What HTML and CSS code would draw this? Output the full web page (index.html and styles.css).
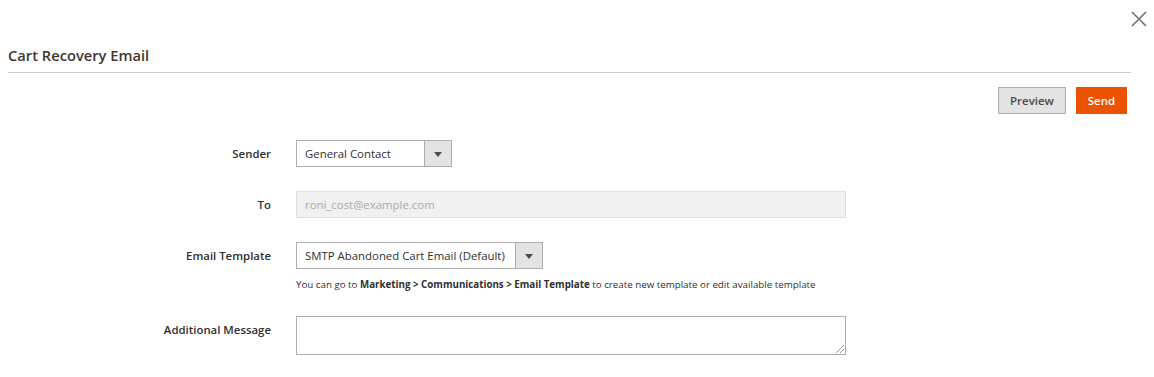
FILE: index.html
```html
<!DOCTYPE html>
<html>
<head>
<meta charset="utf-8">
<link rel="stylesheet" href="styles.css">
</head>
<body>
<div class="modal">
  <div class="modal-top">
    <button class="close" aria-label="Close">
      <svg width="16" height="16" viewBox="0 0 16 16"><path d="M1 1 L15 15 M15 1 L1 15" stroke="#707070" stroke-width="1.6" fill="none"/></svg>
    </button>
  </div>
  <h1 class="title">Cart Recovery Email</h1>
  <div class="actions">
    <button class="btn btn-preview">Preview</button>
    <button class="btn btn-send">Send</button>
  </div>
  <div class="form">
    <div class="row">
      <label class="label">Sender</label>
      <div class="control">
        <div class="select select-sender"><span class="select-text">General Contact</span><span class="select-arrow"></span></div>
      </div>
    </div>
    <div class="row">
      <label class="label">To</label>
      <div class="control">
        <div class="input input-disabled">roni_cost@example.com</div>
      </div>
    </div>
    <div class="row">
      <label class="label">Email Template</label>
      <div class="control">
        <div class="select select-template"><span class="select-text">SMTP Abandoned Cart Email (Default)</span><span class="select-arrow"></span></div>
        <div class="note">You can go to <b>Marketing &gt; Communications &gt; Email Template</b> to create new template or edit available template</div>
      </div>
    </div>
    <div class="row">
      <label class="label">Additional Message</label>
      <div class="control">
        <div class="textarea"><span class="grip"></span></div>
      </div>
    </div>
  </div>
</div>
</body>
</html>
```
FILE: styles.css
```css
* { box-sizing: border-box; }
html, body { margin: 0; padding: 0; background: #fff; }
body { font-family: "Open Sans", "Liberation Sans", sans-serif; color: #303030; }
.modal { width: 1154px; height: 377px; padding: 0 0 0 8px; }
.modal-top { height: 45px; display: flex; justify-content: flex-end; padding: 11px 7px 0 0; }
.close { width: 16px; height: 16px; padding: 0; border: 0; background: none; display: block; }
.close svg { display: block; }
.title { margin: 0; width: 1123px; font-size: 14.7px; font-weight: 600; color: #41362f; line-height: 20px; padding: 0 0 7px; border-bottom: 1px solid #cccccc; }
.actions { display: flex; justify-content: flex-end; gap: 10px; width: 1119px; margin-top: 14px; }
.btn { font-family: inherit; font-size: 11.5px; font-weight: 600; height: 27px; padding: 0; border: 1px solid; line-height: 25px; text-align: center; }
.btn-preview { background: #e3e3e3; border-color: #adadad; color: #514943; width: 68px; }
.btn-send { background: #eb5202; border-color: #eb5202; color: #fff; width: 51px; }
.form { margin-top: 26px; display: flex; flex-direction: column; gap: 24px; }
.row { display: grid; grid-template-columns: 263px 1fr; column-gap: 25px; align-items: start; }
.label { text-align: right; font-size: 11.4px; font-weight: 600; color: #303030; line-height: 27px; }
.control { display: flex; flex-direction: column; }
.select { display: flex; height: 27px; border: 1px solid #adadad; background: #fff; font-size: 11.4px; color: #303030; }
.select-sender { width: 156px; }
.select-template { width: 247px; }
.select-text { flex: 1; padding-left: 8px; line-height: 25px; white-space: nowrap; }
.select-arrow { width: 27px; border-left: 1px solid #adadad; background: #e3e3e3; position: relative; }
.select-arrow::after { content: ""; position: absolute; left: 50%; top: 50%; margin: -2px 0 0 -4px; border-left: 4px solid transparent; border-right: 4px solid transparent; border-top: 5px solid #514943; }
.input { height: 27px; width: 550px; border: 1px solid #adadad; font-size: 11.4px; line-height: 25px; padding-left: 8px; }
.input-disabled { background: #f0f0f0; border-color: #dedede; color: #a9a9a9; }
.note { font-size: 9.75px; color: #303030; margin-top: 9px; line-height: 14px; white-space: nowrap; }
.note b { font-weight: 700; }
.textarea { width: 550px; height: 39px; border: 1px solid #adadad; position: relative; }
.grip { position: absolute; right: 1px; bottom: 1px; width: 8px; height: 8px; background: linear-gradient(135deg, transparent 45%, #999 45%, #999 52%, transparent 52%, transparent 70%, #999 70%, #999 77%, transparent 77%); }
```
